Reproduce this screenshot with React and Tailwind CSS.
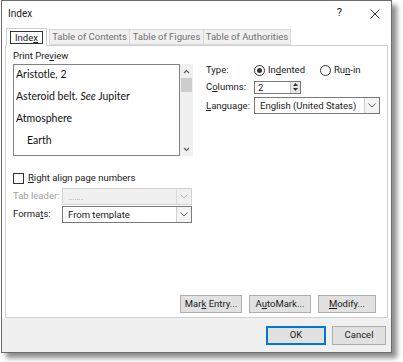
import React from "react";

const ui = { fontFamily: 'Roboto, "Open Sans", sans-serif' };
const prev = { fontFamily: 'Lato, "Open Sans", sans-serif' };

function Chevron({ disabled }) {
  return (
    <svg width="8" height="5" viewBox="0 0 8 5">
      <path d="M0.5 0.5 L4 4 L7.5 0.5" fill="none" stroke={disabled ? "#b5b5b5" : "#606060"} strokeWidth="1" />
    </svg>
  );
}

function Select({ text, width, disabled }) {
  return (
    <div
      className={`flex h-[17px] items-center border ${disabled ? "border-[#d3d3d3] bg-[#f0f0f0] text-[#a0a0a0]" : "border-[#7a7a7a] bg-white text-[#1a1a1a]"}`}
      style={{ width }}
    >
      <div className="flex-1 truncate whitespace-nowrap pl-[5px] text-[9.5px] leading-none">{text}</div>
      <div className={`flex h-full w-[15px] items-center justify-center border-l ${disabled ? "border-[#dcdcdc]" : "border-[#cfcfcf] bg-[#f3f3f3]"}`}>
        <Chevron disabled={disabled} />
      </div>
    </div>
  );
}

function Btn({ children, className = "", w }) {
  return (
    <div
      className={`flex h-[18px] items-center justify-center border border-[#adadad] bg-[#e1e1e1] text-[9.5px] text-[#1a1a1a] ${className}`}
      style={{ width: w }}
    >
      <span className="whitespace-nowrap">{children}</span>
    </div>
  );
}

export default function App() {
  return (
    <div className="h-[362px] w-[403px] bg-white" style={ui}>
      <div className="ml-[1px] flex h-[353px] w-[391px] flex-col border border-[#6b6b6b] bg-white shadow-[5px_5px_5px_rgba(0,0,0,0.45)]">
        {/* title bar */}
        <div className="flex h-[25px] items-center pl-[6px] text-[10px] text-[#1a1a1a]">
          <span>Index</span>
          <span className="ml-auto mr-[28px] text-[11px]">?</span>
          <svg width="10" height="10" viewBox="0 0 10 10" className="mr-[11px]">
            <path d="M0.5 0.5 L9.5 9.5 M9.5 0.5 L0.5 9.5" stroke="#333" strokeWidth="1" />
          </svg>
        </div>
        {/* tabs */}
        <div className="flex h-[19px] items-end pl-[4px] text-[9.5px]">
          <div className="z-10 -mb-[1px] flex h-[18px] w-[41px] items-center justify-center border border-b-0 border-[#d0d0d0] bg-white pb-[1px] text-[#1a1a1a]">
            <span className="border border-[#333] px-[4px] leading-[11px]">
              Inde<u>x</u>
            </span>
          </div>
          <div className="ml-[2px] flex h-[16px] w-[81px] items-center justify-center border border-[#d9d9d9] bg-[#f0f0f0] text-[#707070]">
            <span className="whitespace-nowrap">Table of Contents</span>
          </div>
          <div className="flex h-[16px] w-[74px] items-center justify-center border border-l-0 border-[#d9d9d9] bg-[#f0f0f0] text-[#707070]">
            <span className="whitespace-nowrap">Table of Figures</span>
          </div>
          <div className="flex h-[16px] w-[87px] items-center justify-center border border-l-0 border-[#d9d9d9] bg-[#f0f0f0] text-[#707070]">
            <span className="whitespace-nowrap">Table of Authorities</span>
          </div>
        </div>
        {/* panel */}
        <div className="mx-[3px] flex h-[273px] flex-col border border-[#d0d0d0] bg-white px-[7px] pt-[4px] text-[9.5px] text-[#1a1a1a]">
          <div className="flex">
            {/* left column */}
            <div className="flex w-[180px] flex-col">
              <div className="h-[14px] leading-[12px]">
                Print Pre<u>v</u>iew
              </div>
              <div className="flex h-[92px]">
                <div className="flex-1 border border-[#828282] pl-[2px] text-[10.5px] leading-none text-[#111]" style={prev}>
                  <div className="pt-[4px]">Aristotle, 2</div>
                  <div className="pt-[11px]">
                    Asteroid belt. <i>See</i> Jupiter
                  </div>
                  <div className="pt-[12px]">Atmosphere</div>
                  <div className="pl-[11px] pt-[11px]">Earth</div>
                </div>
                <div className="flex w-[13px] flex-col items-center bg-[#f0f0f0]">
                  <svg width="7" height="5" viewBox="0 0 7 5" className="mt-[5px]">
                    <path d="M1 4 L3.5 1.5 L6 4" fill="none" stroke="#606060" strokeWidth="1.2" />
                  </svg>
                  <div className="mt-[4px] h-[14px] w-[11px] bg-[#cdcdcd]" />
                  <svg width="7" height="5" viewBox="0 0 7 5" className="mt-auto mb-[4px]">
                    <path d="M1 1 L3.5 3.5 L6 1" fill="none" stroke="#606060" strokeWidth="1.2" />
                  </svg>
                </div>
              </div>
              <div className="mt-[16px] flex h-[12px] items-center gap-[4px]">
                <div className="h-[11px] w-[11px] border border-[#333] bg-white" />
                <span>
                  <u>R</u>ight align page numbers
                </span>
              </div>
              <div className="mt-[4px] flex items-center">
                <span className="w-[49px] whitespace-nowrap text-[#a0a0a0]">Tab leader:</span>
                <Select text="……." width={130} disabled />
              </div>
              <div className="mt-[1px] flex items-center">
                <span className="w-[49px] whitespace-nowrap">
                  Forma<u>t</u>s:
                </span>
                <Select text="From template" width={130} />
              </div>
            </div>
            {/* right column */}
            <div className="ml-[13px] flex flex-col pt-[13px]">
              <div className="flex h-[14px] items-center">
                <span className="w-[48px]">Type:</span>
                <div className="flex items-center gap-[3px]">
                  <div className="flex h-[11px] w-[11px] items-center justify-center rounded-full border border-[#333]">
                    <div className="h-[5px] w-[5px] rounded-full bg-[#333]" />
                  </div>
                  <span className="whitespace-nowrap">
                    In<u>d</u>ented
                  </span>
                </div>
                <div className="ml-[15px] flex items-center gap-[3px]">
                  <div className="h-[11px] w-[11px] rounded-full border border-[#333]" />
                  <span className="whitespace-nowrap">
                    Ru<u>n</u>-in
                  </span>
                </div>
              </div>
              <div className="mt-[3px] flex items-center">
                <span className="w-[48px]">
                  C<u>o</u>lumns:
                </span>
                <div className="flex h-[13px] w-[47px] border border-[#7a7a7a]">
                  <div className="flex-1 pl-[3px] text-[9.5px] leading-[11px]">2</div>
                  <div className="flex w-[10px] flex-col border-l border-[#c8c8c8] bg-[#e6e6e6]">
                    <div className="flex flex-1 items-center justify-center">
                      <svg width="5" height="3" viewBox="0 0 5 3"><path d="M0 3 L2.5 0 L5 3Z" fill="#333" /></svg>
                    </div>
                    <div className="flex flex-1 items-center justify-center">
                      <svg width="5" height="3" viewBox="0 0 5 3"><path d="M0 0 L2.5 3 L5 0Z" fill="#333" /></svg>
                    </div>
                  </div>
                </div>
              </div>
              <div className="mt-[3px] flex items-center">
                <span className="w-[48px]">
                  <u>L</u>anguage:
                </span>
                <Select text="English (United States)" width={126} />
              </div>
            </div>
          </div>
          <div className="mt-auto mb-[4px] flex justify-end gap-[7px] pr-[4px]">
            <Btn w={62}>
              Mar<u>k</u> Entry...
            </Btn>
            <Btn w={62}>
              A<u>u</u>toMark...
            </Btn>
            <Btn w={58}>
              <u>M</u>odify...
            </Btn>
          </div>
        </div>
        {/* footer */}
        <div className="flex flex-1 items-center justify-end gap-[6px] bg-[#f0f0f0] pr-[5px]">
          <Btn w={60} className="h-[19px] !border-2 !border-[#0078d7]">OK</Btn>
          <Btn w={54} className="h-[19px]">Cancel</Btn>
        </div>
      </div>
    </div>
  );
}
